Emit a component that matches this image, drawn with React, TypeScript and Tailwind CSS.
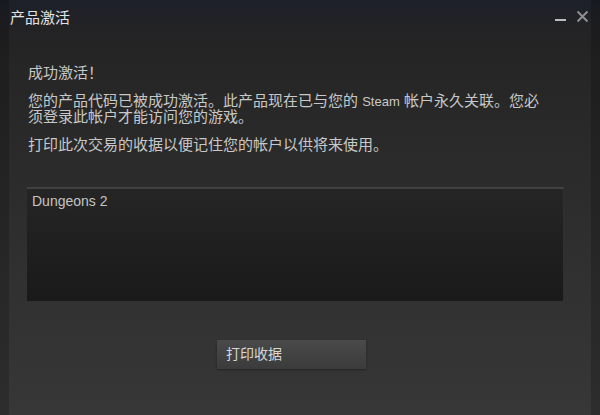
export default function App() {
  return (
    <div className="w-[600px] h-[415px] overflow-hidden border-x-[9px] border-[rgba(0,0,0,0.18)] bg-[linear-gradient(to_bottom,#1c2029_0px,#232325_28px,#262626_70px,#2f2f2f_250px,#373737_415px)] font-['Liberation_Sans','Noto_Sans_CJK_SC',sans-serif] text-[15px] leading-[15px] text-[#c8c8c8]">
      {/* title bar */}
      <div className="h-[34px] flex items-center justify-between">
        <span className="pl-[1px] text-[#e2e4e6]">产品激活</span>
        <div className="flex items-center gap-[10px] pr-[2px]">
          <div className="w-[11px] h-[2px] bg-[#bcbcbc] mt-[5px]" />
          <svg width="13" height="13" viewBox="0 0 13 13" className="mb-[2px]">
            <path d="M1.5 1.5 L11.5 11.5 M11.5 1.5 L1.5 11.5" stroke="#8e8e8e" strokeWidth="2" />
          </svg>
        </div>
      </div>

      <div className="pl-[19px]">
        <p className="mt-[31px]">成功激活！</p>
        <p className="mt-[13px]">
          您的产品代码已被成功激活。此产品现在已与您的 <span className="text-[13px]">Steam</span> 帐户永久关联。您必
          <br />
          须登录此帐户才能访问您的游戏。
        </p>
        <p className="mt-[13px]">打印此次交易的收据以便记住您的帐户以供将来使用。</p>

        <div className="mt-[35px] -ml-[1px] w-[537px] h-[114px] border-t-2 border-[#414141] border-r border-r-[#303030] bg-[linear-gradient(to_bottom,#252525,#1a1a1a)] px-[5px] pt-[4px]">
          <span className="font-['Liberation_Sans',sans-serif] text-[14px] leading-[16px] text-[#c4c4c4]">Dungeons 2</span>
        </div>

        <div className="mt-[39px] ml-[189px] w-[149px] h-[29px] flex items-center pl-[9px] bg-[linear-gradient(to_bottom,#4a4a4a,#3b3b3b)] shadow-[0_1px_2px_rgba(0,0,0,0.35)] text-[14px] text-[#d6d6d6]">
          打印收据
        </div>
      </div>
    </div>
  );
}
